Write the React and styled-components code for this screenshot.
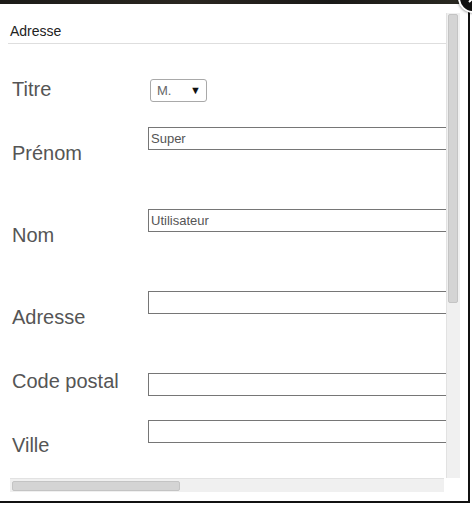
import React from "react";
import styled, { createGlobalStyle } from "styled-components";

const GlobalStyle = createGlobalStyle`
  html, body {
    margin: 0;
    padding: 0;
    background: #ffffff;
  }
  body {
    font-family: "Liberation Sans", Arial, sans-serif;
  }
`;

const Page = styled.div`
  position: relative;
  width: 472px;
  height: 505px;
  overflow: hidden;
  background: #ffffff;
`;

const Backdrop = styled.div`
  height: 4px;
  background: linear-gradient(90deg, #1c1b18 0%, #2a2620 40%, #1a1917 70%, #2b2a22 100%);
`;

// white dialog with its dark drop edge on the right and bottom
const Dialog = styled.div`
  width: 452px;
  height: 479px;
  background: #ffffff;
  border-right: 2px solid #111;
  border-bottom: 2px solid #111;
  border-top-left-radius: 5px;
  padding: 9px 8px;
  display: flex;
  flex-direction: column;
`;

const CloseButton = styled.button`
  position: absolute;
  left: 458px;
  top: -17px;
  width: 30px;
  height: 30px;
  padding: 0;
  border-radius: 50%;
  border: 2px solid #ffffff;
  background: #111;
  box-shadow: 0 0 3px rgba(0, 0, 0, 0.6);
  display: flex;
  align-items: center;
  justify-content: center;
`;

const ScrollPanel = styled.div`
  display: grid;
  grid-template-columns: 438px 14px;
  grid-template-rows: 465px 14px;
`;

const Viewport = styled.div`
  overflow: hidden;
`;

const Legend = styled.div`
  font-size: 14px;
  line-height: 16px;
  color: #222;
  padding: 10px 0 4px 2px;
  border-bottom: 1px solid #dedede;
`;

const Form = styled.div`
  padding-left: 4px;
  display: flex;
  flex-direction: column;
`;

const Row = styled.div`
  display: grid;
  grid-template-columns: 136px 1fr;
  align-items: start;
  margin-top: ${(p) => p.$gap}px;
`;

const Label = styled.div`
  font-size: 20px;
  line-height: 23px;
  color: #555;
  padding-top: ${(p) => p.$offset}px;
  white-space: nowrap;
`;

const Field = styled.div`
  padding-top: ${(p) => p.$offset}px;
`;

const TextInput = styled.input`
  display: block;
  box-sizing: border-box;
  width: 980px;
  height: 23px;
  margin: 0;
  padding: 0 2px;
  border: 1px solid #767676;
  border-radius: 0;
  font-family: "Liberation Sans", Arial, sans-serif;
  font-size: 13px;
  color: #555;
  background: #fff;
  outline: none;
`;

const SelectBox = styled.div`
  box-sizing: border-box;
  width: 57px;
  height: 23px;
  margin-left: 2px;
  border: 1px solid #a9a9a9;
  border-radius: 3px;
  display: flex;
  align-items: center;
  justify-content: space-between;
  padding: 0 5px 0 6px;
  font-size: 13px;
  color: #666;
  background: #fff;
`;

const Caret = styled.span`
  font-size: 11px;
  line-height: 11px;
  color: #111;
`;

const VTrack = styled.div`
  background: #f0f0f0;
  border-left: 1px solid #e2e2e2;
  box-sizing: border-box;
  padding: 1px 2px 0 1px;
`;

const VThumb = styled.div`
  height: 289px;
  background: #d4d4d4;
  border: 1px solid #c4c4c4;
  border-radius: 2px;
  box-sizing: border-box;
`;

const HTrack = styled.div`
  background: #f0f0f0;
  border-top: 1px solid #e2e2e2;
  margin-left: 2px;
  margin-right: 2px;
  box-sizing: border-box;
  padding: 2px 0 1px 2px;
`;

const HThumb = styled.div`
  width: 168px;
  height: 10px;
  background: #d4d4d4;
  border: 1px solid #c4c4c4;
  border-radius: 2px;
  box-sizing: border-box;
`;

const Corner = styled.div`
  background: #ffffff;
`;

const rows = [
  { label: "Titre", gap: 34, labelOffset: 0, fieldOffset: 1, select: "M." },
  { label: "Prénom", gap: 25, labelOffset: 15, fieldOffset: 0, value: "Super" },
  { label: "Nom", gap: 44, labelOffset: 15, fieldOffset: 0, value: "Utilisateur" },
  { label: "Adresse", gap: 44, labelOffset: 15, fieldOffset: 0, value: "" },
  { label: "Code postal", gap: 41, labelOffset: 0, fieldOffset: 3, value: "" },
  { label: "Ville", gap: 24, labelOffset: 14, fieldOffset: 0, value: "" },
];

export default function App() {
  return (
    <Page>
      <GlobalStyle />
      <Backdrop />
      <Dialog>
        <ScrollPanel>
          <Viewport>
            <Legend>Adresse</Legend>
            <Form>
              {rows.map((r) => (
                <Row key={r.label} $gap={r.gap}>
                  <Label $offset={r.labelOffset}>{r.label}</Label>
                  <Field $offset={r.fieldOffset}>
                    {r.select ? (
                      <SelectBox>
                        <span>{r.select}</span>
                        <Caret>▼</Caret>
                      </SelectBox>
                    ) : (
                      <TextInput defaultValue={r.value} />
                    )}
                  </Field>
                </Row>
              ))}
            </Form>
          </Viewport>
          <VTrack>
            <VThumb />
          </VTrack>
          <HTrack>
            <HThumb />
          </HTrack>
          <Corner />
        </ScrollPanel>
      </Dialog>
      <CloseButton aria-label="Fermer">
        <svg width="12" height="12" viewBox="0 0 12 12">
          <path d="M2 2 L10 10 M10 2 L2 10" stroke="#fff" strokeWidth="2" />
        </svg>
      </CloseButton>
    </Page>
  );
}
